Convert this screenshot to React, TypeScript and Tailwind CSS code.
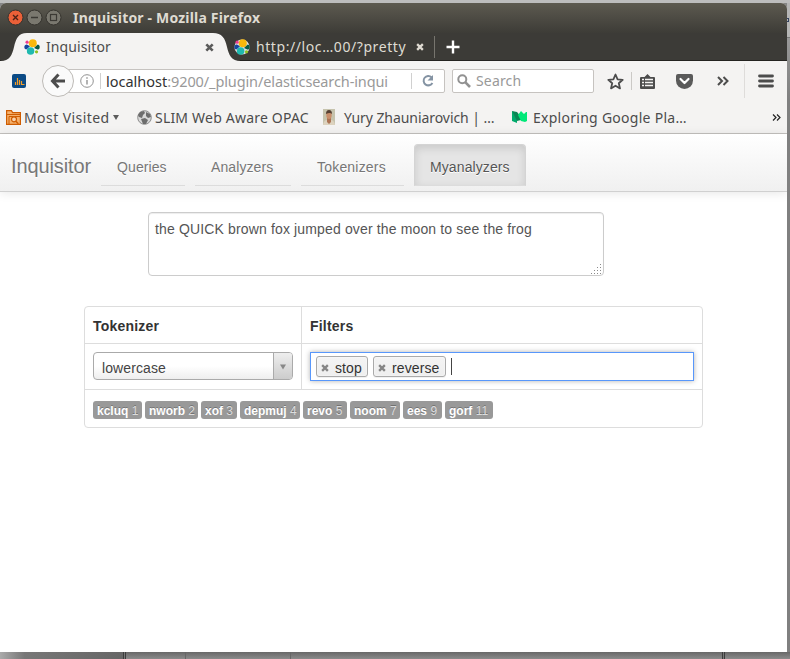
import React from "react";

const ui = "font-['Noto_Sans','Open_Sans',sans-serif]";

function ElasticIcon() {
  return (
    <svg width="16" height="16" viewBox="0 0 16 16" className="block shrink-0">
      <circle cx="8" cy="8" r="7.6" fill="#fff" opacity="0.85" />
      <circle cx="8.8" cy="4.2" r="4" fill="#f9b80c" />
      <circle cx="6.6" cy="12" r="3.8" fill="#20b9af" />
      <circle cx="3.1" cy="3.2" r="1.6" fill="#ee3d8f" />
      <path d="M.3 8.2c0-2 1.4-3 2.6-2.7L6 7.2 2.4 10.4C1 10.2.3 9.4.3 8.2z" fill="#17479e" />
      <path d="M15.7 8.2c0-1.5-.8-2.4-2-2.6L10 9l3.4 1.6c1.4 0 2.3-1 2.3-2.4z" fill="#0a5a45" />
      <circle cx="12.5" cy="12.8" r="1.6" fill="#8fbf21" />
    </svg>
  );
}

function Cross({ color, size = 9, weight = 2.6 }: { color: string; size?: number; weight?: number }) {
  return (
    <svg width={size} height={size} viewBox="0 0 9 9" className="block shrink-0">
      <path d="M1.3 1.3L7.7 7.7M7.7 1.3L1.3 7.7" stroke={color} strokeWidth={weight} />
    </svg>
  );
}

function TitleBar() {
  return (
    <div className="flex h-[30px] items-center bg-linear-to-b from-[#5d5a50] to-[#3d3c37] pl-[7px]">
      <svg width="56" height="18" viewBox="0 0 56 18" className="mr-[10px] block">
        <circle cx="8.5" cy="8.5" r="7.5" fill="#ea6038" stroke="#35332e" />
        <path d="M6 6l5 5M11 6l-5 5" stroke="#4b2217" strokeWidth="1.4" />
        <circle cx="27.5" cy="8.5" r="7.5" fill="#7a786f" stroke="#35332e" />
        <path d="M24 8.500h7" stroke="#3b3934" strokeWidth="1.3" />
        <circle cx="46.5" cy="8.5" r="7.5" fill="#7a786f" stroke="#35332e" />
        <rect x="43.5" y="5.5" width="6" height="6" fill="none" stroke="#3b3934" strokeWidth="1.2" />
      </svg>
      <span className={`${ui} whitespace-nowrap text-[14px] font-bold leading-[18px] tracking-[0.18px] text-[#dfdbd2]`}>
        Inquisitor - Mozilla Firefox
      </span>
    </div>
  );
}

function TabStrip() {
  return (
    <div className={`${ui} relative flex h-[28px] items-center bg-[#3c3b37] text-[14px] leading-[20px]`}>
      <svg width="787" height="28" viewBox="0 0 787 28" className="absolute left-0 top-0 block">
        <path d="M0 27.5H787" stroke="#242320" />
        <path d="M0 28C10 28 12 22 14 14C16 6 18 0 27 0H213C222 0 225 5 227 14C229 22 231 28 241 28z" fill="#f4f3f2" />
      </svg>
      <div className="relative flex w-[218px] items-center pl-[24px]">
        <ElasticIcon />
        <span className="ml-[6px] w-[159px] whitespace-nowrap tracking-[0.1px] text-[#4c4c4c]">Inquisitor</span>
        <Cross color="#5c5c5c" />
      </div>
      <div className="relative flex w-[216px] items-center pl-[16px]">
        <ElasticIcon />
        <span className="ml-[6px] w-[160px] whitespace-nowrap tracking-[0.58px] text-[#dfdbd2]">http://loc…00/?pretty</span>
        <Cross color="#dfdbd2" size={8} />
      </div>
      <div className="relative h-[22px] w-px bg-[#77756e]" />
      <svg width="14" height="14" viewBox="0 0 14 14" className="relative ml-[11px] block">
        <path d="M7 .5v13M.5 7h13" stroke="#fff" strokeWidth="2.4" />
      </svg>
    </div>
  );
}

function NavBar() {
  return (
    <div className={`${ui} flex h-[40px] items-center text-[15px] leading-[22px]`}>
      <svg width="14" height="14" viewBox="0 0 14 14" className="ml-[12px] block shrink-0">
        <rect width="14" height="14" rx="2" fill="#0b4a85" />
        <path d="M3.5 11V8M5.5 11V4M7.5 11V6M9.500 11V7M10 10.5h2.500" stroke="#f49d27" strokeWidth="1.2" />
      </svg>
      <div className="z-10 ml-[16px] flex size-[32px] shrink-0 items-center justify-center rounded-full border border-[#bdbab6] bg-[#fafafa]">
        <svg width="16" height="16" viewBox="0 0 16 16" className="block">
          <path d="M8.5 1.5L2.5 8l6 6.5M2.5 8H15" fill="none" stroke="#4c4c4c" strokeWidth="3" />
        </svg>
      </div>
      <div className="-ml-[6px] flex h-[24px] w-[377px] shrink-0 items-center rounded-r-[2px] border border-[#c6c3c0] bg-white">
        <svg width="14" height="14" viewBox="0 0 14 14" className="ml-[11px] block shrink-0">
          <circle cx="7" cy="7" r="6.3" fill="none" stroke="#929292" />
          <path d="M7 6v4.5M7 3.2v1.5" stroke="#929292" strokeWidth="1.4" />
        </svg>
        <div className="ml-[6px] h-[16px] w-px bg-[#d0d0d0]" />
        <div className="ml-[5px] w-[305px] overflow-hidden whitespace-nowrap text-[14.5px] tracking-[-0.11px] text-[#999]">
          <span className="tracking-normal text-[#333]">localhost</span>:9200/_plugin/elasticsearch-inqui
        </div>
        <div className="h-[16px] w-px bg-[#d0d0d0]" />
        <svg width="14" height="14" viewBox="0 0 14 14" className="ml-[9px] block shrink-0">
          <path d="M10.5 3.2A4.7 4.7 0 1 0 11.4 9" fill="none" stroke="#8493a3" strokeWidth="2" />
          <path d="M12 1v5.5H6.5z" fill="#8493a3" />
        </svg>
      </div>
      <div className="ml-[7px] flex h-[24px] w-[142px] shrink-0 items-center rounded-[2px] border border-[#c6c3c0] bg-white">
        <svg width="14" height="14" viewBox="0 0 14 14" className="ml-[4px] block shrink-0">
          <circle cx="5.3" cy="5.3" r="4" fill="none" stroke="#929292" strokeWidth="2" />
          <path d="M8.2 8.2L13 13" stroke="#929292" strokeWidth="2.6" />
        </svg>
        <span className="ml-[5px] text-[14px] tracking-[0.15px] text-[#999]">Search</span>
      </div>
      <svg width="17" height="17" viewBox="0 0 17 17" className="ml-[13px] block shrink-0">
        <path d="M8.5 1.5l2.1 4.8 5.1.5-3.9 3.4 1.2 5.2-4.5-2.7L4 15.4l1.2-5.2L1.3 6.8l5.1-.5z" fill="none" stroke="#4c4c4c" strokeWidth="1.8" strokeLinejoin="round" />
      </svg>
      <div className="ml-[7px] h-[18px] w-px shrink-0 bg-[#cbc9c6]" />
      <svg width="15" height="15" viewBox="0 0 15 15" className="ml-[8px] block shrink-0">
        <path d="M1 3h3.5L7.5 0l3 3H14q1 0 1 1v10q0 1-1 1H1q-1 0-1-1V4q0-1 1-1z" fill="#4c4c4c" />
        <path d="M2 5.5h2M5 5.5h8M2 8.5h2M5 8.5h8M2 11.5h2M5 11.5h8" stroke="#f4f3f2" strokeWidth="1.6" />
      </svg>
      <svg width="17" height="15" viewBox="0 0 17 15" className="ml-[21px] block shrink-0">
        <path d="M2 0h13q2 0 2 2v4.5a8.5 8.5 0 0 1-17 0V2q0-2 2-2z" fill="#5a5a5a" />
        <path d="M4.5 5l4 4 4-4" fill="none" stroke="#fff" strokeWidth="2.2" strokeLinecap="round" strokeLinejoin="round" />
      </svg>
      <svg width="12" height="10" viewBox="0 0 12 10" className="ml-[24px] block shrink-0">
        <path d="M1 1l4 4-4 4M6.5 1l4 4-4 4" fill="none" stroke="#4c4c4c" strokeWidth="2" />
      </svg>
      <div className="ml-[15px] h-[34px] w-px shrink-0 bg-[#dedcda]" />
      <svg width="16" height="14" viewBox="0 0 16 14" className="ml-[13px] block shrink-0">
        <path d="M1.5 2h13M1.5 7h13M1.5 12h13" stroke="#4c4c4c" strokeWidth="2.800" strokeLinecap="round" />
      </svg>
    </div>
  );
}

function BookmarksBar() {
  return (
    <div className={`${ui} flex h-[33px] items-center whitespace-nowrap border-b border-[#c3c1be] text-[14px] leading-[20px] text-[#4c4c4c]`}>
      <svg width="15" height="15" viewBox="0 0 15 15" className="ml-[6px] block shrink-0">
        <path d="M.6 14.4V.6h4.800l1.200 2h7.800v11.800z" fill="#f5b16c" stroke="#cf5c00" strokeWidth="1.2" />
        <path d="M1 4.5h13M3 14V6.5h11" fill="none" stroke="#cf5c00" />
        <circle cx="8" cy="9.3" r="2.5" fill="#f8d3ae" stroke="#cf5c00" strokeWidth="1.2" />
        <path d="M9.8 11.2l2.6 2.5" stroke="#cf5c00" strokeWidth="1.5" />
      </svg>
      <span className="relative top-px ml-[3px] w-[90px] tracking-[0.42px]">Most Visited</span>
      <svg width="6" height="5" viewBox="0 0 6 5" className="-ml-px block shrink-0">
        <path d="M0 0h6L3 5z" fill="#5c5c5c" />
      </svg>
      <svg width="15" height="15" viewBox="0 0 15 15" className="ml-[18px] block shrink-0">
        <circle cx="7.5" cy="7.5" r="6.8" fill="#d8d8d8" stroke="#8b8b8b" />
        <path d="M3 2l4-1 1 2-2 2-1 3-3-1-1-2zM9 2l4 2 1 3-3 1-2-2zM4 9l4-1 3 2-2 4H6z" fill="#6d6d6d" />
      </svg>
      <span className="relative top-px ml-[3px] w-[166px] tracking-[0.2px]">SLIM Web Aware OPAC</span>
      <svg width="12" height="16" viewBox="0 0 12 16" className="ml-[2px] block shrink-0">
        <rect width="12" height="16" fill="#c6c3ad" />
        <path d="M0 16q1-5 4-5h4q3 0 4 5z" fill="#ddd3bf" />
        <path d="M4 8h4v5l-2 2-2-2z" fill="#ac7353" />
        <ellipse cx="6" cy="6" rx="2.7" ry="4" fill="#c98e6b" />
        <path d="M3 5q0-4 3-4t3 4Q7 3 3 5" fill="#564033" />
      </svg>
      <span className="relative top-px ml-[9px] w-[161px] tracking-[-0.06px]">Yury Zhauniarovich | …</span>
      <svg width="16" height="12" viewBox="0 0 16 12" className="ml-[7px] block shrink-0">
        <path d="M0 0l5 3v9L0 10z" fill="#00ab6c" />
        <path d="M0 0l5 1 4 5v3l-4 1z" fill="#0b8655" />
        <path d="M6 4l3-4 3 3 2-2 1 0v9l-2 1-4-1z" fill="#00e878" />
      </svg>
      <span className="relative top-px ml-[5px] w-[238px] tracking-[0.27px]">Exploring Google Pla…</span>
      <svg width="9" height="7" viewBox="0 0 9 7" className="ml-px block shrink-0">
        <path d="M1 .5l3 3-3 3M5 .5l3 3-3 3" fill="none" stroke="#222" strokeWidth="1.2" />
      </svg>
    </div>
  );
}

function SiteNav() {
  const item = "ml-[10px] h-[42px] border-b border-[#dcdcdc] pl-[16px] leading-[46px]";
  return (
    <div className="flex h-[58px] items-start border-b border-[#d0d0d0] bg-linear-to-b from-white to-[#f0f0f0] pt-[10px] text-[14px] text-[#777] shadow-[0_1px_10px_rgba(0,0,0,0.1)] [text-shadow:0_1px_0_#fff]">
      <span className="ml-[11px] w-[80px] text-[20px] leading-[45px] tracking-[-0.1px]">Inquisitor</span>
      <span className={`${item} w-[84px] tracking-[0.1px]`}>Queries</span>
      <span className={`${item} w-[96px] tracking-[0.1px]`}>Analyzers</span>
      <span className={`${item} w-[103px] tracking-[0.2px]`}>Tokenizers</span>
      <span className="ml-[10px] h-[42px] w-[112px] rounded-t-[4px] border border-b-[#dcdcdc] border-[#d4d4d4] bg-[#e5e5e5] pl-[15px] leading-[44px] tracking-[0.1px] text-[#555] shadow-[inset_0_3px_8px_rgba(0,0,0,0.125)]">
        Myanalyzers
      </span>
    </div>
  );
}

function Chip({ label, width }: { label: string; width: string }) {
  return (
    <div className={`${width} flex h-[21px] items-center rounded-[3px] border border-[#aaa] bg-linear-to-b from-[#f4f4f4] to-[#eee] pl-[4px] text-[14px] leading-[18px] tracking-[0.1px] text-[#333] shadow-[inset_0_0_2px_#fff,0_1px_0_rgba(0,0,0,0.05)]`}>
      <div className="flex w-[9px] items-center pt-[2px]">
        <Cross color="#858585" size={8} />
      </div>
      <span className="relative top-px ml-[5px]">{label}</span>
    </div>
  );
}

const tokens: [string, number, string][] = [
  ["kcluq", 1, "w-[49px]"],
  ["nworb", 2, "w-[53px]"],
  ["xof", 3, "w-[36px]"],
  ["depmuj", 4, "w-[60px]"],
  ["revo", 5, "w-[44px]"],
  ["noom", 7, "w-[50px]"],
  ["ees", 9, "w-[39px]"],
  ["gorf", 11, "w-[48px]"],
];

function AnalyzerTable() {
  return (
    <div className="ml-[84px] mt-[30px] w-[619px] rounded-[4px] border border-[#ddd] text-[14px] text-[#333]">
      <div className="flex h-[37px] border-b border-[#ddd] font-bold leading-[38px] tracking-[0.2px]">
        <div className="w-[217px] border-r border-[#ddd] pl-[8px]">Tokenizer</div>
        <div className="pl-[8px]">Filters</div>
      </div>
      <div className="flex h-[46px] border-b border-[#ddd]">
        <div className="w-[217px] border-r border-[#ddd] pl-[8px] pt-[8px]">
          <div className="flex h-[28px] w-[200px] overflow-hidden rounded-[4px] border border-[#aaa] bg-linear-to-b from-white from-50% to-[#eee] leading-[30px] tracking-[0.1px] text-[#444]">
            <span className="flex-1 pl-[8px]">lowercase</span>
            <div className="flex w-[19px] items-center justify-center border-l border-[#aaa] bg-linear-to-b from-[#eee] to-[#ccc] pt-[2px]">
              <svg width="6" height="6" viewBox="0 0 6 6" className="block">
                <path d="M0 .5h6L3 5.5z" fill="#888" />
              </svg>
            </div>
          </div>
        </div>
        <div className="pl-[8px] pt-[8px]">
          <div className="flex h-[29px] w-[384px] items-center gap-[5px] border border-[#5897fb] bg-white pl-[5px] shadow-[0_0_5px_rgba(0,0,0,0.3)]">
            <Chip label="stop" width="w-[52px]" />
            <Chip label="reverse" width="w-[73px]" />
            <div className="h-[17px] w-px bg-[#444]" />
          </div>
        </div>
      </div>
      <div className="flex h-[37px] items-start gap-[3px] pl-[8px] pt-[11px]">
        {tokens.map(([word, pos, width]) => (
          <div key={word} className={`${width} h-[18px] whitespace-nowrap rounded-[3px] bg-[#999] pl-[4px] text-[12px] font-bold leading-[20px] text-white [text-shadow:0_-1px_0_rgba(0,0,0,0.25)]`}>
            {word} <span className="font-normal text-[#ddd]">{pos}</span>
          </div>
        ))}
      </div>
    </div>
  );
}

function Page() {
  return (
    <div className="flex-1 bg-white font-['Liberation_Sans',Arial,sans-serif]">
      <SiteNav />
      <div className="ml-[148px] mt-[20px] flex h-[64px] w-[456px] items-end justify-between rounded-[4px] border border-[#ccc] bg-white pl-[6px] text-[14px] leading-[20px] text-[#555] shadow-[inset_0_1px_1px_rgba(0,0,0,0.075)]">
        <span className="self-start whitespace-nowrap pt-[6px] tracking-[0.145px]">the QUICK brown fox jumped over the moon to see the frog</span>
        <svg width="12" height="12" viewBox="0 0 12 12" className="block shrink-0">
          <path d="M9 1.5h1M6 4.5h1M9 4.5h1M6 7.5h1M3 7.5h1M9 7.5h1M0 10.5h1M3 10.5h1M6 10.5h1M9 10.5h1" stroke="#8a8a8a" strokeWidth="1.2" />
        </svg>
      </div>
      <AnalyzerTable />
    </div>
  );
}

export default function App() {
  return (
    <div className="flex h-[659px] w-[790px] flex-col overflow-hidden bg-[#858585]">
      <div className="h-[3px] shrink-0 bg-[#bdbdbd]" />
      <div className="flex h-[649px] shrink-0">
        <div className="flex w-[787px] flex-col overflow-hidden rounded-t-[6px] bg-[#f4f3f2]">
          <TitleBar />
          <TabStrip />
          <NavBar />
          <BookmarksBar />
          <Page />
        </div>
        <div className="flex w-[3px] flex-col">
          <div className="h-[34px] bg-[#b5b5b5] pt-[15px]">
            <div className="h-[4px] w-[2px] border border-l-0 border-[#34425e]" />
          </div>
          <div className="flex-1 border-t border-[#777] bg-linear-to-b from-[#999] to-[#808080] to-10%" />
        </div>
      </div>
      <div className="flex h-[7px] bg-linear-to-b from-[#686868] to-[#8b8b8b]">
        <div className="w-[123px] bg-linear-to-r from-[#aaa] via-[#777] via-20% to-[#666]" />
        <div className="w-[3px] border-x border-[#3c3c3c] bg-[#777]" />
        <div className="w-[60px] border-r border-[#676767]" />
        <div className="w-[105px] border-r border-[#676767]" />
        <div className="w-[431px]" />
        <div className="w-[3px] border-x border-[#3c3c3c] bg-[#777]" />
      </div>
    </div>
  );
}
